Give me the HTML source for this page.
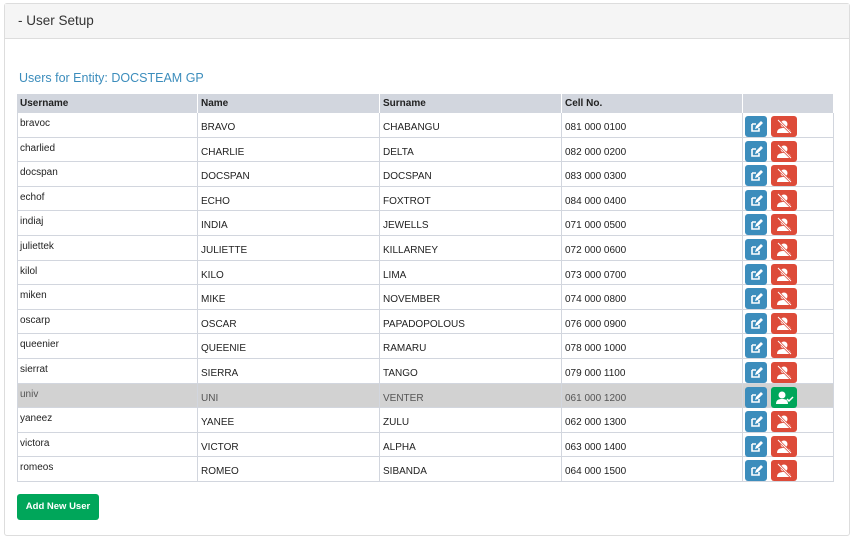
<!DOCTYPE html>
<html><head><style>
body{margin:0;background:#fff;font-family:"Liberation Sans",sans-serif;}
.panel{position:absolute;left:4px;top:3px;width:844px;height:531px;border:1px solid #ddd;border-radius:3px;}
.hd{height:34px;background:#f5f5f5;border-bottom:1px solid #ddd;font-size:13.5px;color:#333;line-height:34px;padding-left:13px;}
.title{position:absolute;left:14px;top:67px;font-size:12.5px;color:#3c8dbc;}
.c{position:absolute;font-size:10px;color:#222;box-sizing:border-box;padding-left:3px;}
.hc{position:absolute;top:94px;height:19px;background:#d2d6de;font-size:10px;font-weight:bold;line-height:19px;padding-left:3px;box-sizing:border-box;border-right:1px solid #fff;color:#222}
.row{position:absolute;left:17px;width:817px;border-bottom:1px solid #d2d6de;box-sizing:border-box;}
.g{background:#d2d2d2;}
.btn{position:absolute;height:21px;border-radius:3px;}
.e{width:22px;background:#3c8dbc;}.r{width:26px;background:#dd4b39;}.ok{width:26px;background:#00a65a;}
.add{position:absolute;left:17px;top:494px;width:82px;height:26px;background:#00a65a;border-radius:3px;color:#fff;font-size:9.5px;font-weight:bold;text-align:center;line-height:26px;}
.vl{position:absolute;top:113px;height:369px;width:1px;background:#d2d6de;}
</style></head><body>
<div class="panel">
<div class="hd">- User Setup</div>
<div class="title">Users for Entity: DOCSTEAM GP</div>
</div>
<div id="t"></div>
<div class="add">Add New User</div>
<script>
var d=[["bravoc","BRAVO","CHABANGU","081 000 0100"],["charlied","CHARLIE","DELTA","082 000 0200"],["docspan","DOCSPAN","DOCSPAN","083 000 0300"],["echof","ECHO","FOXTROT","084 000 0400"],["indiaj","INDIA","JEWELLS","071 000 0500"],["juliettek","JULIETTE","KILLARNEY","072 000 0600"],["kilol","KILO","LIMA","073 000 0700"],["miken","MIKE","NOVEMBER","074 000 0800"],["oscarp","OSCAR","PAPADOPOLOUS","076 000 0900"],["queenier","QUEENIE","RAMARU","078 000 1000"],["sierrat","SIERRA","TANGO","079 000 1100"],["univ","UNI"," VENTER","061 000 1200"],["yaneez","YANEE"," ZULU","062 000 1300"],["victora","VICTOR"," ALPHA","063 000 1400"],["romeos","ROMEO"," SIBANDA","064 000 1500"]];
var X=[17,198,380,562,743,834];
var ed='<svg width="22" height="21"><path d="M7 8h4M7 8v7h7v-3" stroke="#fff" stroke-width="1.6" fill="none"/><path d="M10 13l1-3 5-5 2 2-5 5z" fill="#fff"/></svg>';
var rd='<svg width="26" height="21"><circle cx="13" cy="8" r="3.5" fill="#fff"/><path d="M6 17c0-4 3-5 7-5s7 1 7 5z" fill="#fff"/><path d="M7 4l13 13" stroke="#dd4b39" stroke-width="2.5"/><path d="M7 4l13 13" stroke="#fff" stroke-width="1"/></svg>';
var ok='<svg width="26" height="21"><circle cx="11" cy="8" r="3.5" fill="#fff"/><path d="M5 17c0-4 2.5-5 6-5s6 1 6 5z" fill="#fff"/><path d="M16 12l2 2 4-4" stroke="#fff" stroke-width="1.5" fill="none"/></svg>';
var h='';var hs=["Username","Name","Surname","Cell No.",""];
for(var k=0;k<5;k++)h+='<div class="hc" style="left:'+X[k]+'px;width:'+(X[k+1]-X[k])+'px">'+hs[k]+'</div>';
d.forEach(function(r,i){var y=113+i*24.6;
h+='<div class="row'+(i==11?' g':'')+'" style="top:'+y+'px;height:24.6px"></div>';
var col=i==11?'#555':'#222';
h+='<div class="c" style="left:'+X[0]+'px;top:'+(y+5)+'px;color:'+col+'">'+r[0]+'</div>';
for(var k=1;k<4;k++)h+='<div class="c" style="left:'+X[k]+'px;top:'+(y+9)+'px;color:'+col+'">'+r[k]+'</div>';
h+='<div class="btn e" style="left:745px;top:'+(y+3)+'px">'+ed+'</div>';
h+='<div class="btn '+(i==11?'ok':'r')+'" style="left:771px;top:'+(y+3)+'px">'+(i==11?ok:rd)+'</div>';
});
for(var k=0;k<6;k++)h+='<div class="vl" style="left:'+(X[k]-(k==0?0:1))+'px"></div>';
document.getElementById('t').innerHTML=h;
</script>
</body></html>
